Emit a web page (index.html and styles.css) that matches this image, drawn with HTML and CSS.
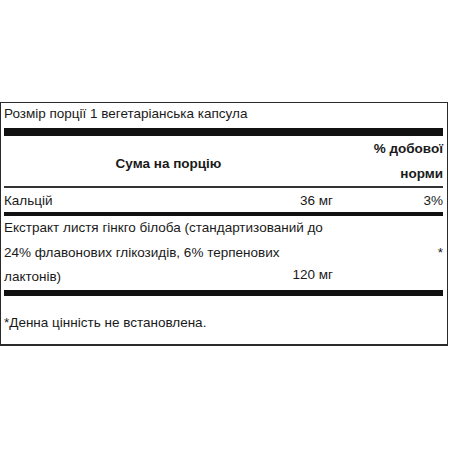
FILE: index.html
```html
<!DOCTYPE html>
<html lang="uk">
<head>
<meta charset="utf-8">
<title>Склад</title>
<link rel="stylesheet" href="styles.css">
</head>
<body>
<div class="label">
  <div class="serving">Розмір порції 1 вегетаріанська капсула</div>
  <div class="bar bar-top"></div>
  <div class="head">
    <div class="head-amount">Сума на порцію</div>
    <div class="head-pct">% добової<br>норми</div>
  </div>
  <div class="rule"></div>
  <div class="row row-ca">
    <div class="name">Кальцій</div>
    <div class="amt">36 мг</div>
    <div class="pct">3%</div>
  </div>
  <div class="bar bar-mid"></div>
  <div class="row row-ext">
    <div class="name name-wide">Екстракт листя гінкго білоба (стандартизований до 24% флавонових глікозидів, 6% терпенових лактонів)</div>
    <div class="amt amt-low">120 мг</div>
    <div class="pct pct-mid">*</div>
  </div>
  <div class="bar bar-bot"></div>
  <div class="foot">*Денна цінність не встановлена.</div>
</div>
</body>
</html>
```

FILE: styles.css
```css
html, body {
  margin: 0;
  padding: 0;
  background: #fff;
}
body {
  font-family: "Liberation Sans", Arial, sans-serif;
  font-size: 13.5px;
  color: #1a1a1a;
}
.label {
  margin-top: 102px;
  width: 448px;
  box-sizing: border-box;
  border: 1px solid #2a2a2a;
  border-bottom-width: 2px;
  padding: 0 4px 0 3px;
}
.serving {
  line-height: 21px;
  padding-bottom: 4px;
}
.bar {
  background: #111;
}
.bar-top { height: 8px; }
.bar-mid { height: 4px; }
.bar-bot { height: 6px; }
.rule {
  height: 2px;
  background: #333;
}
.head {
  display: grid;
  grid-template-columns: 1fr 110px;
  height: 50px;
  font-weight: bold;
}
.head-amount {
  align-self: center;
  text-align: center;
  padding-top: 5px;
}
.head-pct {
  text-align: right;
  line-height: 24.5px;
  padding-top: 1px;
}
.row {
  display: grid;
  grid-template-columns: 1fr 43px 110px;
}
.row-ca {
  line-height: 22px;
  padding-top: 2px;
}
.amt, .pct {
  text-align: right;
  white-space: nowrap;
}
.row-ext {
  line-height: 24.5px;
}
.name-wide {
  grid-column: 1 / 3;
  grid-row: 1;
}
.amt-low {
  grid-column: 2;
  grid-row: 1;
  align-self: end;
  justify-self: end;
  margin-bottom: 2px;
}
.pct-mid {
  grid-column: 3;
  grid-row: 1;
  align-self: center;
  line-height: 14px;
}
.foot {
  line-height: 20px;
  padding: 17px 0 11px;
}
```
